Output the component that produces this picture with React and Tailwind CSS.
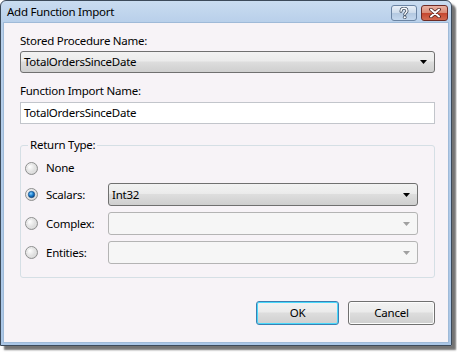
import React from 'react'

const font = "font-['Noto_Sans','Liberation_Sans',sans-serif]"
const txt = 'text-[11.5px] leading-[16px] tracking-[-0.25px] text-black'

function Arrow({ disabled }) {
  return (
    <svg width="7" height="4" viewBox="0 0 7 4" className="block">
      <path d="M0 0h7L3.5 4z" fill={disabled ? '#a0a0a0' : '#000'} />
    </svg>
  )
}

function Combo({ value, disabled, className = '' }) {
  return (
    <div
      className={`relative flex items-center rounded-[3px] border pl-[3px] pr-[7px] ${
        disabled
          ? 'border-[#b4b4b4] bg-[#f6f6f6]'
          : 'border-[#707070] bg-[linear-gradient(#f2f2f2_0%,#ebebeb_45%,#dddddd_50%,#cfcfcf_100%)]'
      } ${className}`}
    >
      <span className={`flex-1 ${txt}`}>{value}</span>
      <Arrow disabled={disabled} />
    </div>
  )
}

function Radio({ checked }) {
  return (
    <svg width="13" height="13" viewBox="0 0 13 13" className="block shrink-0">
      <defs>
        <radialGradient id="rg" cx="0.35" cy="0.35" r="0.8">
          <stop offset="0" stopColor="#ffffff" />
          <stop offset="1" stopColor="#c9c9c9" />
        </radialGradient>
        <radialGradient id="dot" cx="0.4" cy="0.35" r="0.7">
          <stop offset="0" stopColor="#8fd3ff" />
          <stop offset="0.5" stopColor="#1a7fcf" />
          <stop offset="1" stopColor="#0a3f7a" />
        </radialGradient>
      </defs>
      <circle cx="6.5" cy="6.5" r="6" fill="url(#rg)" stroke="#8e8f8f" />
      <circle cx="6.5" cy="6.5" r="4.3" fill="none" stroke="#e4e4e4" strokeWidth="0.8" />
      {checked && <circle cx="6.5" cy="6.5" r="3.2" fill="url(#dot)" stroke="#11437a" strokeWidth="0.6" />}
    </svg>
  )
}

function RadioRow({ label, checked, combo, disabled }) {
  return (
    <div className="flex h-[23px] items-center">
      <Radio checked={checked} />
      <span className={`ml-[8px] w-[62px] ${txt}`}>{label}</span>
      <Combo value={combo} disabled={disabled} className="h-[23px] w-[310px]" />
    </div>
  )
}

function TitleButtons() {
  return (
    <div className="flex items-start gap-[4px] pt-[4px]">
      <div className="flex h-[16px] w-[26px] items-center justify-center rounded-[3px] border border-[#6b84a3] bg-[linear-gradient(#e9f0f8_0%,#cddbeb_50%,#b3c8e0_51%,#c4d8ee_100%)]">
        <svg width="10" height="12" viewBox="0 0 10 12">
          <path
            d="M2 4.2C2 2.2 3.4 1.2 5 1.2S8 2.2 8 3.9C8 5.6 5.8 5.9 5.8 7.6"
            fill="none"
            stroke="#3a4a5e"
            strokeWidth="3"
            strokeLinecap="round"
          />
          <path
            d="M2 4.2C2 2.2 3.4 1.2 5 1.2S8 2.2 8 3.9C8 5.6 5.8 5.9 5.8 7.6"
            fill="none"
            stroke="#fff"
            strokeWidth="1.4"
            strokeLinecap="round"
          />
          <circle cx="5.8" cy="10.3" r="1.5" fill="#fff" stroke="#3a4a5e" strokeWidth="0.8" />
        </svg>
      </div>
      <div className="flex h-[16px] w-[27px] items-center justify-center rounded-[3px] border border-[#6e2b25] bg-[linear-gradient(#eab2a3_0%,#d98a74_50%,#c5462e_51%,#d36a50_100%)]">
        <svg width="14" height="10" viewBox="0 0 14 10">
          <path d="M3 1.5l8 7M11 1.5l-8 7" stroke="#4a1d18" strokeWidth="3.6" strokeLinecap="round" />
          <path d="M3 1.5l8 7M11 1.5l-8 7" stroke="#fff" strokeWidth="2" strokeLinecap="round" />
        </svg>
      </div>
    </div>
  )
}

export default function App() {
  return (
    <div className={`h-[352px] w-[457px] bg-white ${font}`}>
      <div className="flex h-[346px] w-[452px] flex-col rounded-t-[6px] border border-[#3c4a5a] bg-[linear-gradient(#c9dcf0_0px,#b8cfea_22px,#aac6e6_100%)] shadow-[4px_4px_2px_rgba(0,0,0,0.55)]">
        <div className="flex h-[21px] items-start justify-between pl-[6px] pr-[3px]">
          <span className={`pt-[3px] ${txt}`}>Add Function Import</span>
          <TitleButtons />
        </div>
        <div className="flex flex-1 px-[2px] pb-[2px]">
          <div className="flex flex-1 flex-col border border-[#9fbad8] bg-[#f7f3f7] pl-[16px] pr-[13px] pt-[10px]">
            <div className={txt}>Stored Procedure Name:</div>
            <Combo value="TotalOrdersSinceDate" className="mt-[2px] h-[22px]" />
            <div className={`mt-[10px] ${txt}`}>Function Import Name:</div>
            <div className={`mt-[3px] flex h-[22px] items-center border border-[#c2c5cb] bg-white px-[3px] ${txt}`}>
              TotalOrdersSinceDate
            </div>
            <div className="relative mt-[21px] h-[133px] rounded-[3px] border border-[#d5dfe5] pl-[4px] pt-[14px]">
              <span className={`absolute -top-[9px] left-[7px] bg-[#f7f3f7] px-[2px] ${txt}`}>Return Type:</span>
              <div className="flex flex-col gap-[6px]">
                <div className="mb-[1px] flex h-[16px] items-center">
                  <Radio />
                  <span className={`ml-[8px] ${txt}`}>None</span>
                </div>
                <RadioRow label="Scalars:" checked combo="Int32" />
                <RadioRow label="Complex:" combo="" disabled />
                <RadioRow label="Entities:" combo="" disabled />
              </div>
            </div>
            <div className="mt-[23px] flex justify-end gap-[9px]">
              <button className={`h-[24px] w-[83px] rounded-[3px] border border-[#3c7fb1] bg-[linear-gradient(#f2f2f2_0%,#ebebeb_45%,#dddddd_50%,#cfcfcf_100%)] shadow-[inset_0_0_0_1px_#48d8fb] ${txt}`}>
                OK
              </button>
              <button className={`h-[24px] w-[87px] rounded-[3px] border border-[#707070] bg-[linear-gradient(#f2f2f2_0%,#ebebeb_45%,#dddddd_50%,#cfcfcf_100%)] shadow-[inset_0_0_0_1px_#fcfcfc] ${txt}`}>
                Cancel
              </button>
            </div>
          </div>
        </div>
      </div>
    </div>
  )
}
